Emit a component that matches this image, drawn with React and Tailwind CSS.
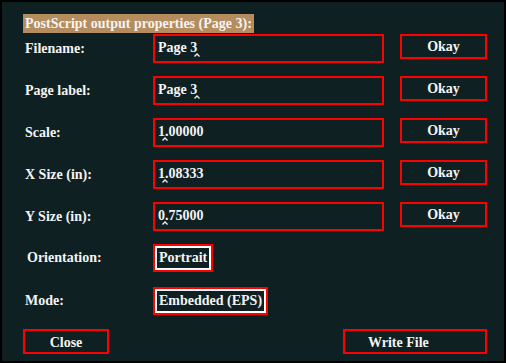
import React from "react";

const Caret = () => (
  <span className="relative inline-block w-0 h-0">
    <svg
      className="absolute left-[-3px] top-[1px]"
      width="6"
      height="4"
      viewBox="0 0 6 4"
    >
      <path d="M0.5 3.5 L3 1 L5.5 3.5" stroke="#f2f2f2" strokeWidth="1.3" fill="none" />
    </svg>
  </span>
);

const fields = [
  { label: "Filename:", before: "Page 3", after: "" },
  { label: "Page label:", before: "Page 3", after: "" },
  { label: "Scale:", before: "1", after: ".00000" },
  { label: "X Size (in):", before: "1", after: ".08333" },
  { label: "Y Size (in):", before: "0", after: ".75000" },
];

const App = () => {
  return (
    <div
      className="w-[506px] h-[363px] bg-[#0f2022] border-2 border-black text-[#f4f4f4] font-bold text-[14px] leading-[16px] pt-[12px] pl-[21px]"
      style={{ fontFamily: '"Liberation Serif", serif' }}
    >
      <div className="inline-block bg-[#b48c5d] h-[19px] px-[2px] pt-[2px]">
        PostScript output properties (Page 3):
      </div>

      <div className="mt-[1px] flex flex-col gap-[13px]">
        {fields.map((f) => (
          <div key={f.label} className="flex items-start">
            <div className="w-[130px] h-[29px] flex items-center pl-[2px]">
              {f.label}
            </div>
            <div className="w-[231px] h-[29px] border-2 border-[#ff0000] pl-[3px] pt-[4px]">
              {f.before}
              <Caret />
              {f.after}
            </div>
            <div className="ml-[16px] w-[87px] h-[25px] border-2 border-[#ff0000] flex items-center justify-center pt-[1px]">
              Okay
            </div>
          </div>
        ))}
      </div>

      <div className="mt-[13px] flex items-center">
        <div className="w-[130px] pl-[4px]">Orientation:</div>
        <div className="h-[28px] border-2 border-[#ff0000]">
          <div className="h-full border-2 border-white px-[2px] flex items-center">
            Portrait
          </div>
        </div>
      </div>

      <div className="mt-[15px] flex items-center">
        <div className="w-[130px] pl-[2px]">Mode:</div>
        <div className="h-[28px] border-2 border-[#ff0000]">
          <div className="h-full border-2 border-white px-[2px] flex items-center">
            Embedded (EPS)
          </div>
        </div>
      </div>

      <div className="mt-[14px] flex items-start">
        <div className="w-[86px] h-[25px] border-2 border-[#ff0000] flex items-center justify-center pt-[2px]">
          Close
        </div>
        <div className="ml-[234px] w-[144px] h-[25px] border-2 border-[#ff0000] flex items-center pl-[23px] pt-[2px]">
          Write File
        </div>
      </div>
    </div>
  );
};

export default App;
